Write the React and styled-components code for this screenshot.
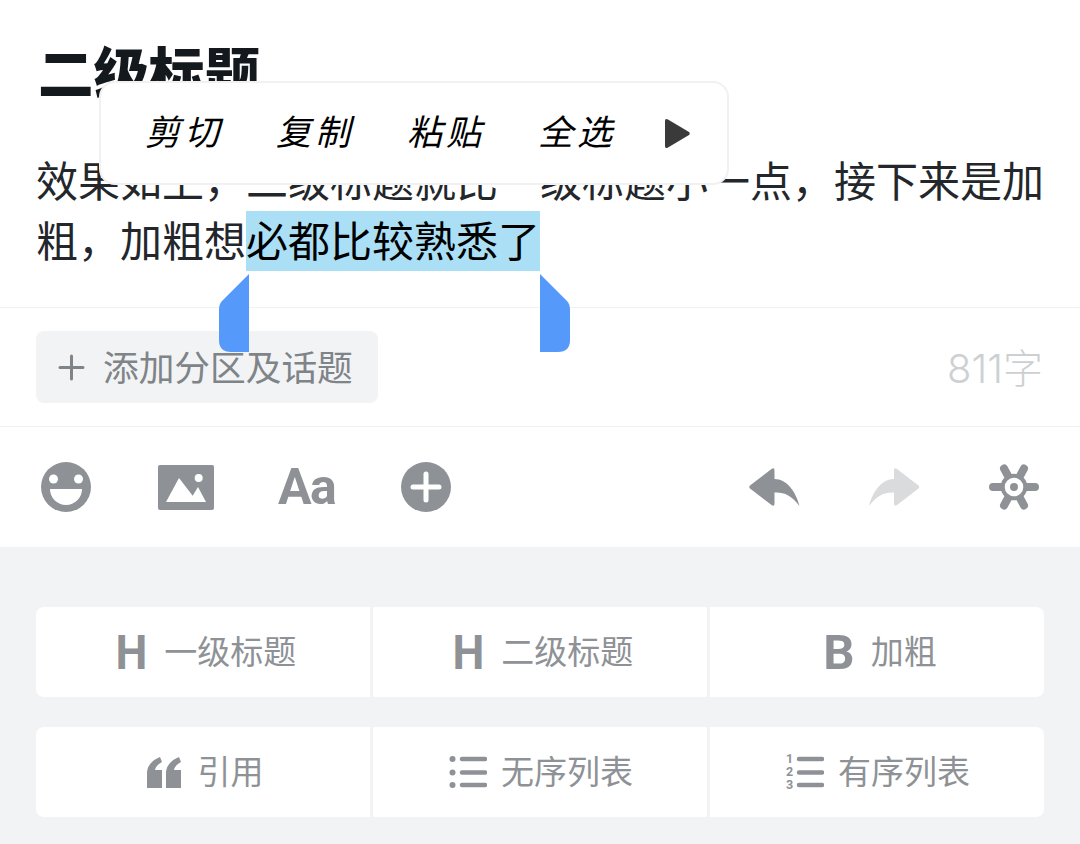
import React from "react";
import styled, { createGlobalStyle } from "styled-components";

const CJK = `"Noto Sans CJK SC", "Noto Sans", sans-serif`;
const GRAY = "#8e9296";

const Global = createGlobalStyle`
  html, body { margin: 0; padding: 0; background: #fff; }
  body { font-family: ${CJK}; overflow: hidden; }
  * { box-sizing: border-box; }
`;

const Page = styled.div`
  position: relative;
  width: 1080px;
  height: 844px;
  overflow: hidden;
  display: flex;
  flex-direction: column;
`;

const Editor = styled.section`
  position: relative;
  height: 308px;
  padding: 35px 36px 0;
  border-bottom: 1px solid #f0f1f2;
`;

const Heading = styled.h2`
  margin: 0 0 44px 2px;
  font-size: 55.5px;
  line-height: 70px;
  font-weight: 900;
  color: #14191e;
  white-space: nowrap;
`;

const Body = styled.p`
  margin: 0;
  font-size: 42px;
  line-height: 60px;
  color: #23272b;
`;

const Selected = styled.span`
  display: inline-block;
  height: 62px;
  background: linear-gradient(#aadff5, #aadff5) 0 2px / 100% 60px no-repeat;
  color: #000;
`;

const Popup = styled.div`
  position: absolute;
  left: 99px;
  top: 81px;
  width: 630px;
  height: 104px;
  display: flex;
  align-items: center;
  padding-left: 44px;
  background: #fff;
  border: 2px solid #f1f1f2;
  border-radius: 16px;
`;

const PopupItem = styled.span`
  width: 131px;
  margin-top: -8px;
  font-size: 35px;
  letter-spacing: 4px;
  font-style: italic;
  font-weight: 400;
  color: #000;
`;

const PopupArrow = styled.svg`
  width: 25px;
  height: 29px;
  margin-left: -4px;
  color: #3a3a3a;
`;

const Handle = styled.svg`
  position: absolute;
  top: 274px;
  left: ${(p) => p.$left}px;
  width: 30px;
  height: 78px;
  transform: ${(p) => (p.$flip ? "scaleX(-1)" : "none")};
  color: #5599fa;
`;

const MetaRow = styled.div`
  height: 119px;
  padding: 23px 37px 23px 36px;
  display: flex;
  justify-content: space-between;
  align-items: center;
  border-bottom: 1px solid #f0f1f2;
`;

const TopicChip = styled.div`
  width: 342px;
  height: 72px;
  display: flex;
  align-items: center;
  gap: 18px;
  padding-left: 22px;
  background: #f2f3f5;
  border-radius: 8px;
  font-size: 35.7px;
  color: #7f8488;
  white-space: nowrap;
`;

const ChipLabel = styled.span`
  margin-bottom: 4px;
`;

const PlusMark = styled.svg`
  width: 27px;
  height: 27px;
  color: #7f8488;
`;

const WordCount = styled.span`
  margin-bottom: 3px;
  font-size: 40px;
  font-weight: 300;
  color: #cdd0d3;
  font-family: Inter, ${CJK};
`;

const Toolbar = styled.div`
  height: 120px;
  padding: 0 41px;
  display: flex;
  justify-content: space-between;
  align-items: center;
`;

const ToolGroup = styled.div`
  display: flex;
  align-items: center;
  gap: ${(p) => p.$gap}px;
`;

const ToolIcon = styled.svg`
  display: block;
  margin-left: ${(p) => p.$nudge || 0}px;
  color: ${(p) => p.$color || GRAY};
`;

const FontTool = styled.span`
  width: 57px;
  margin-left: -2px;
  font-family: Roboto, sans-serif;
  font-weight: 700;
  font-size: 50px;
  line-height: 50px;
  letter-spacing: -1.5px;
  color: ${GRAY};
  text-align: center;
`;

const Panel = styled.div`
  flex: 1;
  background: #f2f3f5;
  padding: 60px 36px 0;
  display: flex;
  flex-direction: column;
  gap: 30px;
`;

const FormatRow = styled.div`
  display: grid;
  grid-template-columns: 334px 334px 334px;
  gap: 3px;
`;

const FormatCell = styled.div`
  height: 90px;
  padding-left: ${(p) => p.$inset ?? 0}px;
  background: #fff;
  display: flex;
  align-items: center;
  justify-content: center;
  gap: ${(p) => p.$gap ?? 16}px;
  font-size: 33px;
  color: ${GRAY};
  white-space: nowrap;
  &:first-child { border-radius: 8px 0 0 8px; }
  &:last-child { border-radius: 0 8px 8px 0; }
`;

const CellLabel = styled.span`
  margin-bottom: 4px;
`;

const GlyphMark = styled.span`
  display: inline-block;
  font-family: Roboto, sans-serif;
  font-weight: 700;
  font-size: 49px;
  line-height: 50px;
  margin-top: 2px;
  color: ${GRAY};
  transform: scaleX(${(p) => p.$squeeze ?? 1});
`;

const FormatIcon = styled.svg`
  display: block;
  color: ${GRAY};
`;

const SmileIcon = () => (
  <ToolIcon width="50" height="50" viewBox="0 0 50 50">
    <circle cx="25" cy="25" r="25" fill="currentColor" />
    <circle cx="12.5" cy="17" r="4.5" fill="#fff" />
    <circle cx="37.5" cy="17" r="4.5" fill="#fff" />
    <path d="M9 27H41A16 16 0 0 1 9 27Z" fill="#fff" />
  </ToolIcon>
);

const ImageIcon = () => (
  <ToolIcon $nudge={1} width="56" height="45" viewBox="0 0 56 45">
    <rect width="56" height="45" rx="2" fill="currentColor" />
    <circle cx="40.7" cy="13" r="4" fill="#fff" />
    <path d="M21 13L8 37H48L40 22L34.7 30.7Z" fill="#fff" />
  </ToolIcon>
);

const AddIcon = () => (
  <ToolIcon width="50" height="50" viewBox="0 0 50 50">
    <circle cx="25" cy="25" r="25" fill="currentColor" />
    <path d="M25 12V38M12 25H38" stroke="#fff" strokeWidth="5" strokeLinecap="round" />
  </ToolIcon>
);

const ARROW = "M1 17.5L22.5 1Q25.5 -1 25.5 2.5V11C38 11 47 24 50.5 38C42 27 35 24 25.5 24.5V35.5Q25.5 39 22.5 37L1 20.5Q-.5 19 1 17.5Z";

const ArrowIcon = ({ flip, color }) => (
  <ToolIcon width="51" height="38" viewBox="0 0 51 38" $color={color}>
    <path d={ARROW} fill="currentColor" transform={flip ? "translate(50.5 0) scale(-1 1)" : undefined} />
  </ToolIcon>
);

const GearIcon = () => (
  <ToolIcon width="50" height="46" viewBox="-25 -23 50 46">
    <path
      d="M-21 0H21M-10 -18.500L10 18.500M10 -18.500L-10 18.500"
      stroke="currentColor"
      strokeWidth="8"
      strokeLinecap="round"
    />
    <circle r="11.300" fill="#fff" stroke="currentColor" strokeWidth="4" />
    <circle r="4" fill="currentColor" />
  </ToolIcon>
);

const QuoteIcon = () => (
  <FormatIcon width="35" height="31" viewBox="0 0 35 31">
    <path d="M0 31V15Q1 5 13 0L15 5Q9 8 8 13H15V31ZM19 31V15Q20 5 32 0L34 5Q28 8 27 13H34V31Z" fill="currentColor" />
  </FormatIcon>
);

const BulletIcon = () => (
  <FormatIcon width="38" height="32" viewBox="0 0 38 32">
    <g fill="currentColor">
      <circle cx="3.5" cy="3" r="3" />
      <circle cx="3.5" cy="16.500" r="3" />
      <circle cx="3.5" cy="29" r="3" />
    </g>
    <path d="M13 3H36M13 16.500H36M13 29H36" stroke="currentColor" strokeWidth="4.500" strokeLinecap="round" />
  </FormatIcon>
);

const NumberIcon = () => (
  <FormatIcon width="38" height="40" viewBox="0 0 38 40">
    <g fill="currentColor" fontFamily="Roboto, sans-serif" fontWeight="700" fontSize="12.500" textAnchor="middle">
      <text x="3.5" y="11">1</text>
      <text x="3.5" y="24">2</text>
      <text x="3.5" y="36.500">3</text>
    </g>
    <path d="M13 7H36M13 20.500H36M13 33H36" stroke="currentColor" strokeWidth="4.500" strokeLinecap="round" />
  </FormatIcon>
);

const HANDLE = "M30 0L3 27Q0 30 0 36V66Q0 78 12 78H30Z";

export default function App() {
  return (
    <Page>
      <Global />
      <Editor>
        <Heading>二级标题</Heading>
        <Body>
          效果如上，二级标题就比一级标题小一点，接下来是加粗，加粗想<Selected>必都比较熟悉了</Selected>
        </Body>
        <Handle $left={219} viewBox="0 0 30 78"><path d={HANDLE} fill="currentColor" /></Handle>
        <Handle $left={540} $flip viewBox="0 0 30 78"><path d={HANDLE} fill="currentColor" /></Handle>
        <Popup>
          <PopupItem>剪切</PopupItem>
          <PopupItem>复制</PopupItem>
          <PopupItem>粘贴</PopupItem>
          <PopupItem>全选</PopupItem>
          <PopupArrow viewBox="0 0 25 29">
            <path d="M0 2Q0 -1 3 .5L24 13Q25.500 14.500 24 16L3 28.500Q0 30 0 27Z" fill="currentColor" />
          </PopupArrow>
        </Popup>
      </Editor>
      <MetaRow>
        <TopicChip>
          <PlusMark viewBox="0 0 27 27">
            <path d="M13.500 2V25M2 13.500H25" stroke="currentColor" strokeWidth="3" strokeLinecap="round" />
          </PlusMark>
          <ChipLabel>添加分区及话题</ChipLabel>
        </TopicChip>
        <WordCount>811字</WordCount>
      </MetaRow>
      <Toolbar>
        <ToolGroup $gap={66}>
          <SmileIcon />
          <ImageIcon />
          <FontTool>Aa</FontTool>
          <AddIcon />
        </ToolGroup>
        <ToolGroup $gap={69}>
          <ArrowIcon />
          <ArrowIcon flip color="#d9dbdd" />
          <GearIcon />
        </ToolGroup>
      </Toolbar>
      <Panel>
        <FormatRow>
          <FormatCell $inset={4}><GlyphMark $squeeze={0.92}>H</GlyphMark><CellLabel>一级标题</CellLabel></FormatCell>
          <FormatCell $inset={4}><GlyphMark $squeeze={0.92}>H</GlyphMark><CellLabel>二级标题</CellLabel></FormatCell>
          <FormatCell $inset={6}><GlyphMark>B</GlyphMark><CellLabel>加粗</CellLabel></FormatCell>
        </FormatRow>
        <FormatRow>
          <FormatCell $inset={4}><QuoteIcon /><CellLabel>引用</CellLabel></FormatCell>
          <FormatCell $inset={2} $gap={14}><BulletIcon /><CellLabel>无序列表</CellLabel></FormatCell>
          <FormatCell $inset={2} $gap={14}><NumberIcon /><CellLabel>有序列表</CellLabel></FormatCell>
        </FormatRow>
      </Panel>
    </Page>
  );
}
